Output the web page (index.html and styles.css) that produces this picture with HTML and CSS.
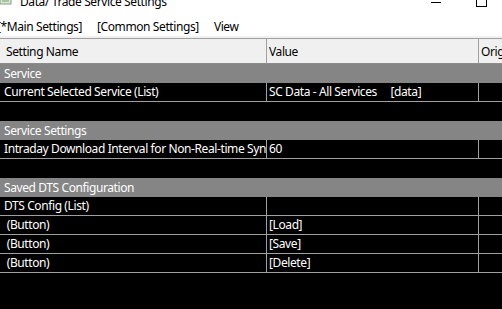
FILE: index.html
```html
<!DOCTYPE html>
<html lang="en">
<head>
    <meta charset="UTF-8">
    <meta name="viewport" content="width=device-width, initial-scale=1.0">
    <title>Data/ Trade Service Settings</title>
    <link rel="stylesheet" href="styles.css">
</head>
<body>
    <div class="window">
        <div class="titlebar">
            <svg class="app-icon" width="12" height="8" viewBox="0 0 12 8">
                <rect x="0" y="-4" width="11" height="10" fill="#dfe6dc" stroke="#8a9a88" stroke-width="1"/>
                <rect x="2" y="0" width="7" height="4" fill="#a7c7a0"/>
            </svg>
            <span class="title">Data/ Trade Service Settings</span>
            <span class="caption-min"></span>
            <span class="caption-max"></span>
        </div>
        <div class="menubar">
            <span class="menu first">[*Main Settings]</span>
            <span class="menu">[Common Settings]</span>
            <span class="menu">View</span>
        </div>
        <div class="sheet">
            <div class="row header">
                <div class="cell name">Setting Name</div>
                <div class="cell value">Value</div>
                <div class="cell orig">Original Value</div>
            </div>

            <div class="group">Service</div>
            <div class="row">
                <div class="cell name">Current Selected Service (List)</div>
                <div class="cell value">SC Data - All Services     [data]</div>
                <div class="cell orig"></div>
            </div>
            <div class="blank"></div>

            <div class="group">Service Settings</div>
            <div class="row">
                <div class="cell name">Intraday Download Interval for Non-Real-time Synchronization</div>
                <div class="cell value">60</div>
                <div class="cell orig"></div>
            </div>
            <div class="blank"></div>

            <div class="group">Saved DTS Configuration</div>
            <div class="row">
                <div class="cell name">DTS Config (List)</div>
                <div class="cell value"></div>
                <div class="cell orig"></div>
            </div>
            <div class="row">
                <div class="cell name"> (Button)</div>
                <div class="cell value">[Load]</div>
                <div class="cell orig"></div>
            </div>
            <div class="row">
                <div class="cell name"> (Button)</div>
                <div class="cell value">[Save]</div>
                <div class="cell orig"></div>
            </div>
            <div class="row">
                <div class="cell name"> (Button)</div>
                <div class="cell value">[Delete]</div>
                <div class="cell orig"></div>
            </div>
        </div>
    </div>
</body>
</html>
```

FILE: styles.css
```css
html {
background: white;
}

body {
margin: 0;
font-family: "Noto Sans", "Open Sans", sans-serif;
font-size: 12px;
letter-spacing: -0.4px;
color: black;
}

.window {
display: flex;
flex-direction: column;
height: 309px;
overflow: hidden;
}

/* title bar, cut off at the top of the shot */
.titlebar {
display: flex;
align-items: flex-start;
height: 18px;
flex: none;
overflow: hidden;
}

.app-icon {
flex: none;
margin-top: -2px;
}

.title {
margin-left: 8px;
margin-top: -6px;
line-height: 16px;
color: #000;
}

.caption-min {
margin-left: auto;
margin-top: 2px;
width: 10px;
height: 1px;
background: black;
}

.caption-max {
margin-left: 35px;
margin-right: 15px;
margin-top: -5px;
width: 9px;
height: 10px;
border: 1px solid black;
}

.menubar {
display: flex;
height: 18px;
line-height: 18px;
flex: none;
white-space: nowrap;
}

.menu {
margin-right: 15px;
}

.menu.first {
margin-left: -3px;
}

.sheet {
flex: 1;
background: black;
border-top: 2px solid #f0f0f0;
}

.row {
display: flex;
height: 18px;
line-height: 18px;
color: white;
border-bottom: 1px solid #a0a0a0;
white-space: pre;
}

.cell {
overflow: hidden;
flex: none;
}

.name {
width: 262px;
padding-left: 4px;
border-right: 1px solid #a0a0a0;
}

.value {
width: 209px;
padding-left: 2px;
border-right: 1px solid #a0a0a0;
}

.orig {
flex: 1;
padding-left: 2px;
}

.row.header {
height: 24px;
line-height: 25px;
color: black;
background: #f0f0f0;
border-top: 1px solid #a0a0a0;
border-bottom: 1px solid #8c8c8c;
}

.header .name {
padding-left: 6px;
width: 260px;
}

.group {
height: 19px;
line-height: 19px;
padding-left: 4px;
background: #858585;
color: white;
}

.blank {
height: 19px;
}
```
